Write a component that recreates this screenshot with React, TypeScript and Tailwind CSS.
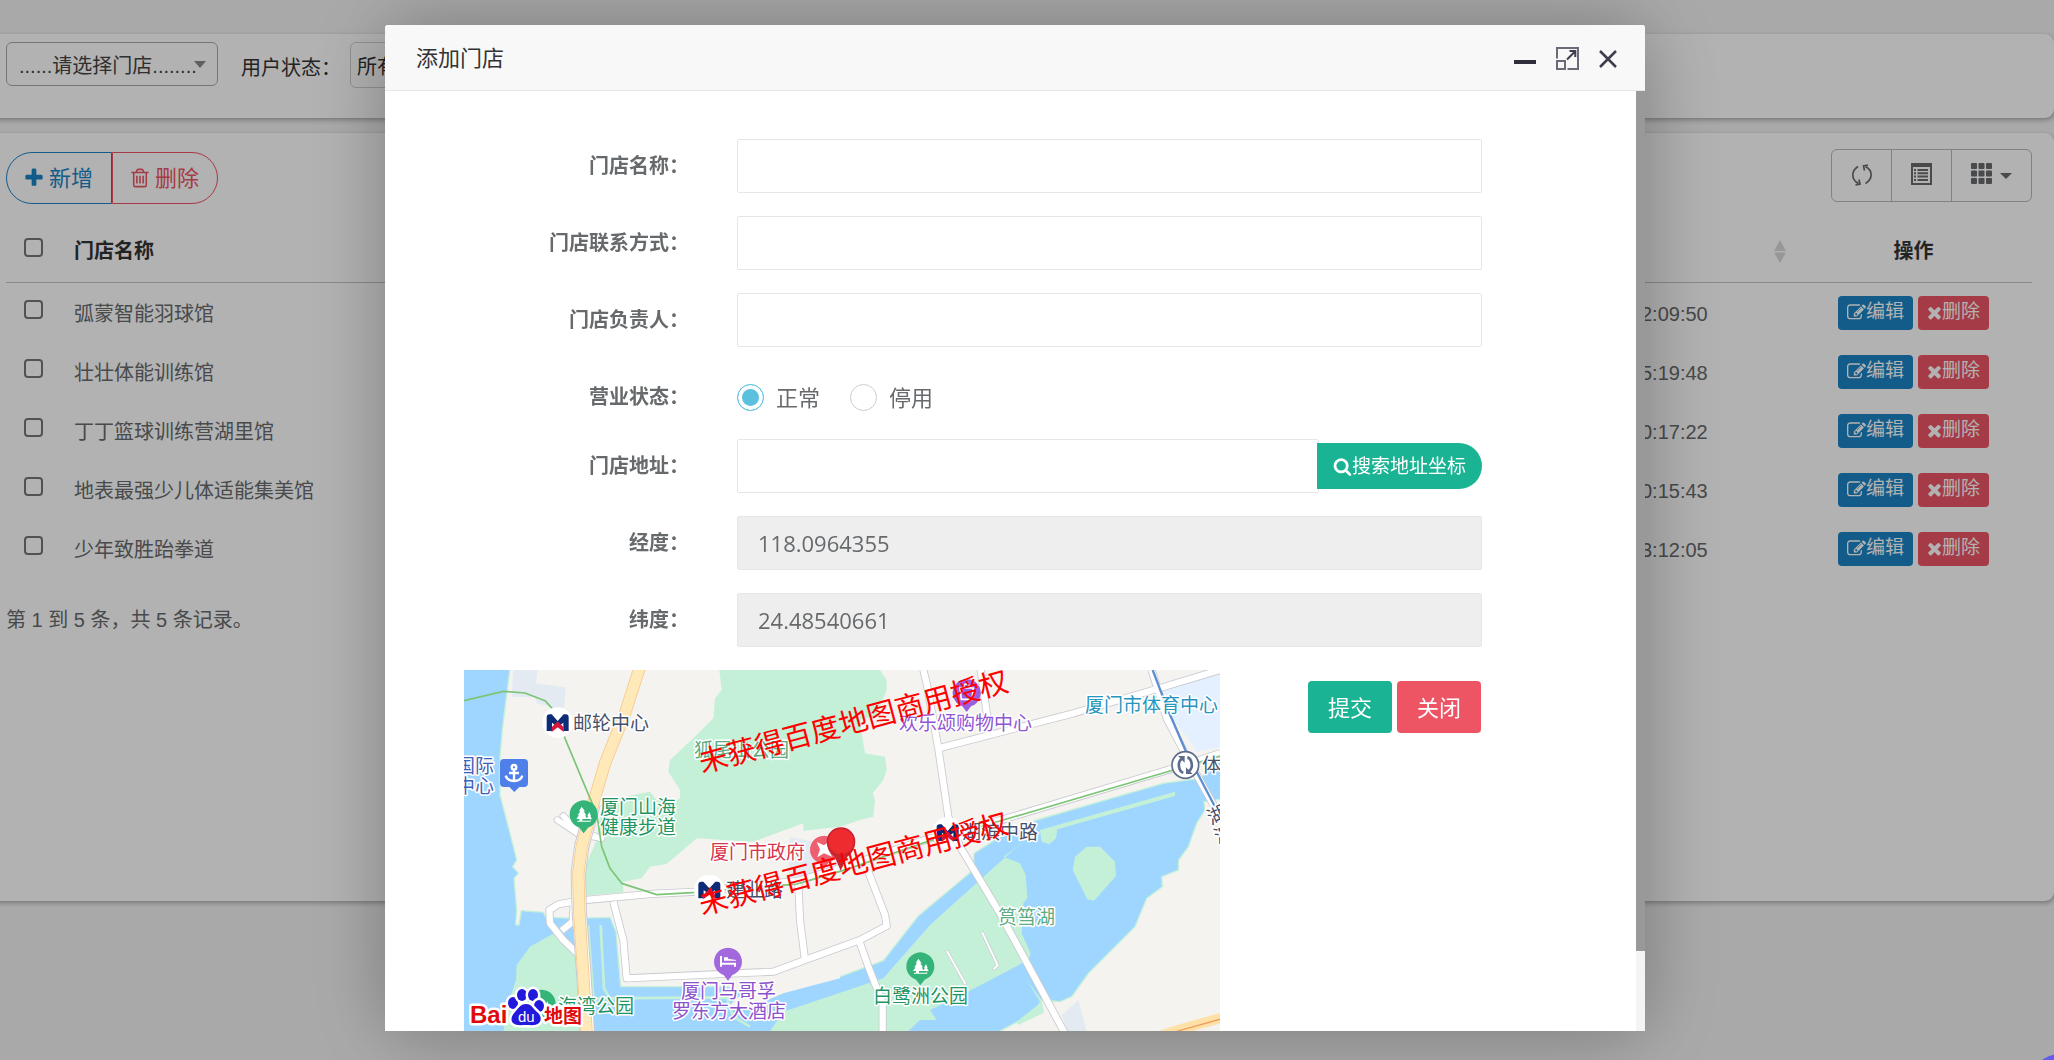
import { useState } from "react";

const icons = {
  plus: "M1600 736v192q0 40-28 68t-68 28h-416v416q0 40-28 68t-68 28h-192q-40 0-68-28t-28-68v-416h-416q-40 0-68-28t-28-68v-192q0-40 28-68t68-28h416v-416q0-40 28-68t68-28h192q40 0 68 28t28 68v416h416q40 0 68 28t28 68z",
  trash:
    "M704 736v576q0 14-9 23t-23 9h-64q-14 0-23-9t-9-23v-576q0-14 9-23t23-9h64q14 0 23 9t9 23zm256 0v576q0 14-9 23t-23 9h-64q-14 0-23-9t-9-23v-576q0-14 9-23t23-9h64q14 0 23 9t9 23zm256 0v576q0 14-9 23t-23 9h-64q-14 0-23-9t-9-23v-576q0-14 9-23t23-9h64q14 0 23 9t9 23zm128 724v-948h-896v948q0 22 7 40.500t14.500 27 10.500 8.500h832q3 0 10.500-8.500t14.500-27 7-40.500zm-672-1076h448l-48-117q-7-9-17-11h-317q-10 2-17 11zm928 32v64q0 14-9 23t-23 9h-96v948q0 83-47 143.500t-113 60.500h-832q-66 0-113-58.500t-47-141.500v-952h-96q-14 0-23-9t-9-23v-64q0-14 9-23t23-9h309l70-167q15-37 54-63t79-26h320q40 0 79 26t54 63l70 167h309q14 0 23 9t9 23z",
  search:
    "M1216 832q0-185-131.500-316.500t-316.500-131.500-316.500 131.500-131.500 316.500 131.500 316.500 316.500 131.500 316.500-131.500 131.500-316.500zm512 832q0 52-38 90t-90 38q-54 0-90-38l-343-342q-179 124-399 124-143 0-273.500-55.500t-225-150-150-225-55.500-273.500 55.500-273.500 150-225 225-150 273.500-55.500 273.500 55.500 225 150 150 225 55.500 273.500q0 220-124 399l343 343q37 37 37 90z",
  times:
    "M1490 1322q0 40-28 68l-136 136q-28 28-68 28t-68-28l-294-294-294 294q-28 28-68 28t-68-28l-136-136q-28-28-28-68t28-68l294-294-294-294q-28-28-28-68t28-68l136-136q28-28 68-28t68 28l294 294 294-294q28-28 68-28t68 28l136 136q28 28 28 68t-28 68l-294 294 294 294q28 28 28 68z",
  edit: "M888 1184l116-116-152-152-116 116v56h96v96h56zm440-720q-16-16-33 1l-350 350q-17 17-1 33t33-1l350-350q17-17 1-33zm80 594v190q0 119-84.500 203.500t-203.500 84.500h-832q-119 0-203.500-84.500t-84.500-203.500v-832q0-119 84.500-203.500t203.500-84.500h832q63 0 117 25 15 7 18 23 3 17-9 29l-49 49q-14 14-32 8-23-6-45-6h-832q-66 0-113 47t-47 113v832q0 66 47 113t113 47h832q66 0 113-47t47-113v-126q0-13 9-22l64-64q15-15 35-7t20 29zm-96-738l288 288-672 672h-288v-288zm444 132l-92 92-288-288 92-92q28-28 68-28t68 28l152 152q28 28 28 68t-28 68z",
};

function Icon({
  name,
  className,
  viewBox = "0 0 1792 1792",
}: {
  name: keyof typeof icons;
  className: string;
  viewBox?: string;
}) {
  return (
    <svg className={className} viewBox={viewBox} fill="currentColor" aria-hidden>
      <path d={icons[name]} />
    </svg>
  );
}

const stores = [
  { name: "弧蒙智能羽球馆", time: "2024-03-18 12:09:50" },
  { name: "壮壮体能训练馆", time: "2024-03-16 15:19:48" },
  { name: "丁丁篮球训练营湖里馆", time: "2024-03-15 10:17:22" },
  { name: "地表最强少儿体适能集美馆", time: "2024-03-15 10:15:43" },
  { name: "少年致胜跆拳道", time: "2024-03-14 13:12:05" },
];

const checkboxClass =
  "block size-[19px] appearance-none rounded border-2 border-[#767676] bg-white checked:bg-[#1c84c6]";

function SearchPanel() {
  return (
    <section className="-ml-3 h-[84px] rounded-[9px] bg-white pt-2 pl-[18px] shadow-[1px_2px_5px_rgba(0,0,0,0.3)]">
      <form className="flex text-[20px] text-[#333]">
        <div className="relative">
          <select
            aria-label="门店"
            className="h-11 w-[212px] appearance-none rounded-md border border-[#aaa] bg-white pt-[3px] pl-3 text-[#444]"
          >
            <option>......请选择门店........</option>
          </select>
          <svg
            className="pointer-events-none absolute top-[19px] right-3 h-[7px] w-3"
            viewBox="0 0 12 7"
            fill="#888"
            aria-hidden
          >
            <path d="M0 0h12L6 7z" />
          </svg>
        </div>
        <label htmlFor="status" className="ml-[23px] pt-[3px] leading-[46px]">
          用户状态：
        </label>
        <select
          id="status"
          className="ml-[9px] h-[46px] w-[160px] appearance-none rounded-md border border-[#d0d0d0] bg-white pt-[3px] pl-[6px]"
        >
          <option>所有</option>
        </select>
      </form>
    </section>
  );
}

function Toolbar() {
  return (
    <div className="flex h-[83px] items-start justify-between">
      <div className="mt-[19px] flex text-[22px]">
        <button className="flex h-[52px] items-center gap-1 rounded-l-full border border-[#1c84c6] pr-[18px] pl-4 text-[#1c84c6]">
          <Icon name="plus" className="size-[22px]" />
          新增
        </button>
        <button className="flex h-[52px] items-center gap-1 rounded-r-full border border-[#ed5565] pr-[18px] pl-4 text-[#ed5565]">
          <Icon name="trash" className="size-[22px]" />
          删除
        </button>
      </div>
      <div className="mt-4 flex h-[53px] divide-x divide-[#bbb] rounded-md border border-[#bbb] text-[#676a6c]">
        <button aria-label="刷新" className="flex w-[60px] items-center justify-center pb-0.5">
          <svg className="size-[22px]" viewBox="0 0 22 22" fill="none" stroke="currentColor" strokeWidth="1.700" aria-hidden>
            <path d="M7 2.500C0 7 0 15.500 7.500 19.500M14.500 19.500C22 15 22 6.500 14.500 2.500" />
            <path d="M4.500 21l4.500-1-1-4.500M17 1l-4.500 1 1 4.500" />
          </svg>
        </button>
        <button aria-label="切换" className="flex w-[60px] items-center justify-center pb-1">
          <svg className="size-[22px]" viewBox="0 0 22 22" fill="currentColor" aria-hidden>
            <path fillRule="evenodd" d="M0 0h21v22H0zM2 4v16h17V4z" />
            <path d="M3 6h2v2H3zM6.500 6H17v2H6.500zM3 9.300h2v2H3zM6.500 9.300H17v2H6.500zM3 12.600h2v2H3zM6.500 12.600H17v2H6.500zM3 16h2v2H3zM6.500 16H17v2H6.500z" />
          </svg>
        </button>
        <button aria-label="列" className="flex w-[79px] items-center justify-center gap-2 pb-1">
          <svg className="size-[21px]" viewBox="0 0 21 21" fill="currentColor" aria-hidden>
            {[0, 7.5, 15].map((y) =>
              [0, 7.5, 15].map((x) => (
                <rect key={`${x}-${y}`} x={x} y={y} width="6" height="6" rx="1" />
              ))
            )}
          </svg>
          <svg className="mt-1 h-[6px] w-3" viewBox="0 0 12 6" fill="currentColor" aria-hidden>
            <path d="M0 0h12L6 6z" />
          </svg>
        </button>
      </div>
    </div>
  );
}

function StorePanel() {
  return (
    <section className="-ml-3 min-h-[768px] rounded-[9px] bg-white pr-[22px] pl-[18px] text-[20px] text-[#676a6c] shadow-[1px_2px_5px_rgba(0,0,0,0.3)]">
      <Toolbar />
      <table className="w-full table-fixed border-separate border-spacing-0">
        <thead>
          <tr className="h-[67px] text-left text-[#333]">
            <th className="w-[68px] border-b border-[#c4c4c4] pb-1 pl-[18px]">
              <input type="checkbox" aria-label="全选" className={checkboxClass} />
            </th>
            <th className="border-b border-[#c4c4c4] pt-1">门店名称</th>
            <th className="w-[273px] border-b border-[#c4c4c4] pt-1">
              <div className="flex items-center justify-between pr-[9px]">
                创建时间
                <svg className="h-[23px] w-3" viewBox="0 0 12 23" fill="#d8d8d8" aria-hidden>
                  <path d="M0 11L6 0l6 11zM0 12.500h12L6 23z" />
                </svg>
              </div>
            </th>
            <th className="w-[237px] border-b border-[#c4c4c4] pt-1 text-center">操作</th>
          </tr>
        </thead>
        <tbody>
          {stores.map(({ name, time }) => (
            <tr key={name} className="h-[59px]">
              <td className="pb-1.5 pl-[18px]">
                <input type="checkbox" aria-label={name} className={checkboxClass} />
              </td>
              <td className="pt-0.5">{name}</td>
              <td className="pt-0.5">{time}</td>
              <td>
                <div className="flex justify-center gap-[5px] text-[19px] text-white">
                  <button className="flex h-[34px] items-center rounded bg-[#1c84c6] px-[9px]">
                    <Icon name="edit" className="size-[19px]" />
                    编辑
                  </button>
                  <button className="flex h-[34px] items-center rounded bg-[#ed5565] px-[9px]">
                    <Icon name="times" className="h-[19px] w-[15px]" viewBox="192 0 1408 1792" />
                    删除
                  </button>
                </div>
              </td>
            </tr>
          ))}
        </tbody>
      </table>
      <p className="mt-[27px] leading-[30px]">第 1 到 5 条，共 5 条记录。</p>
    </section>
  );
}

function Metro({ x, y }: { x: number; y: number }) {
  return (
    <g transform={`translate(${x} ${y})`}>
      <circle r="46" fill="#fff" />
      <path d="M-33 25v-41q0-9 9-9h6L0-5l18-20h6q9 0 9 9v41H17V0L0 14-17 0v25z" fill="#0c2c78" />
      <path d="M0-4l18 18v14L0 14l-18 14V14z" fill="#d6173c" />
    </g>
  );
}

function Pin({ x, y, fill, children }: { x: number; y: number; fill: string; children: React.ReactNode }) {
  return (
    <g transform={`translate(${x} ${y})`}>
      <path d="M0 58L-13 41A42 42 0 1 1 13 41z" fill={fill} />
      {children}
    </g>
  );
}

const Trees = () => (
  <path
    d="M-6-22l10 14h-4l8 12h-4l7 11H-4v5h24v-5H8l6-9h-3l6-12 5 12h-2l5 9h-6v5h2v3h-40v-3h6v-5h-9l8-11h-4l8-12h-4z"
    fill="#fff"
  />
);

const roads = [
  "M385 722L600 702L740 695L1045 662L1190 618L1430 538L1660 478L2170 325L2310 280",
  "M1420 30L1430 70L1465 265L1495 470L1530 560L1650 760L1850 1130",
  "M1465 265L1870 160L2110 90L2310 30",
  "M1592 30L1620 228",
  "M2105 30L2150 175L2210 290L2310 470",
  "M490 725L520 840L530 955L970 935L1065 900L1230 840L1310 798L1305 765L1255 635",
  "M1045 670L1050 780L1065 900",
  "M1225 835L1255 920L1298 1030L1298 1130",
  "M385 722L325 733L298 750L300 790L340 840L392 890",
  "M372 720L368 785L335 812",
];

const labels = [
  { text: "邮轮中心", x: 109, y: 60, fill: "#46506a" },
  { text: "国际", x: -8, y: 103, fill: "#3f62b8" },
  { text: "中心", x: -8, y: 123, fill: "#3f62b8" },
  { text: "厦门山海", x: 136, y: 144, fill: "#1f9563" },
  { text: "健康步道", x: 136, y: 164, fill: "#1f9563" },
  { text: "狐尾山公园", x: 230, y: 87, fill: "#5cab82" },
  { text: "厦门市政府", x: 246, y: 189, fill: "#d6354c" },
  { text: "建业路", x: 262, y: 227, fill: "#46506a" },
  { text: "厦门马哥孚", x: 217, y: 328, fill: "#8c52cc" },
  { text: "罗东方大酒店", x: 208, y: 348, fill: "#8c52cc" },
  { text: "海湾公园", x: 94, y: 343, fill: "#1f9563" },
  { text: "欢乐颂购物中心", x: 435, y: 60, fill: "#9056d3" },
  { text: "厦门市体育中心", x: 621, y: 42, fill: "#2795bd" },
  { text: "湖滨中路", x: 498, y: 169, fill: "#46506a" },
  { text: "体育", x: 738, y: 102, fill: "#46506a" },
  { text: "筼筜湖", x: 534, y: 254, fill: "#5cab82" },
  { text: "白鹭洲公园", x: 409, y: 333, fill: "#1f9563" },
];

function StoreMap() {
  return (
    <svg
      className="block h-[361px] w-[756px] shrink-0 bg-[#f4f3f0] font-['Noto_Sans_CJK_SC',sans-serif]"
      viewBox="0 0 756 361"
      role="img"
      aria-label="百度地图"
    >
      <g transform="translate(-14 -10) scale(0.333333)">
        {/* blocks */}
        <path d="M190 30H262L258 70L347 82L342 150L260 130L255 112L185 110z" fill="#e3eaf2" />
        <path d="M2310 42L2140 90L2170 180L2220 240L2240 275L2310 260z" fill="#e4efff" />
        <path d="M1020 530L1090 545L1100 640L1015 655z" fill="#e3eaf2" />
        <path d="M1835 1065L1885 1020L1910 1113H1850z" fill="#e3eaf2" />
        {/* water */}
        <path
          d="M20 10H182L168 120L158 200L150 290L150 405L180 520L200 600L188 620L205 640L192 655L200 750L197 795H207L214 752L280 757L287 772L380 775L480 772L498 815L512 980H835L890 1010L1000 995L1170 950L1300 902L1405 768L1570 630L1572 580L1650 530L1760 480L1950 425L2140 370L2250 355L2330 285V415L2262 425L2265 450L2240 490L2215 560L2186 600L2185 630L2135 650L2137 680L2090 715L2055 800L1970 885L1915 940L1865 1010L1830 1025L1775 1020L1750 1060L1650 1113V1140H20z"
          fill="#9fd6ff"
          stroke="#c4f0d8"
          strokeWidth="4"
        />
        {/* parks */}
        <path
          d="M808 30L815 90L795 115L790 175L730 235L660 300L655 335L690 390L690 415L660 430L620 420L600 395L550 405L455 430L440 540L405 620V707L520 697V665L575 655L600 620L650 612L740 535L910 545L1060 490V512L1170 500L1230 480L1270 470L1275 420L1268 400L1300 360L1310 330L1305 290L1245 280L1235 220L1230 180L1280 165L1310 90V60L1290 30z"
          fill="#c4f0d8"
        />
        <path d="M312 820L240 860L200 915L198 960L185 1000L160 1113H400L385 890L340 850z" fill="#c4f0d8" />
        <path
          d="M1000 1055L1170 998L1300 955L1440 795L1590 660L1690 570L1735 535L1660 590L1710 610L1727 645L1732 715L1720 730L1715 820L1742 880L1735 900L1545 1000L1440 1050L1460 1080L1410 1080L1375 1113H960z"
          fill="#c4f0d8"
        />
        <path d="M1770 510L2175 395V408L1822 508L1818 535L1798 553L1775 545z" fill="#c4f0d8" />
        <path d="M1910 560H1950L1995 605L1998 648L1932 722L1912 718L1868 630L1875 590z" fill="#c4f0d8" />
        <path d="M1730 960L1775 1020L1782 1058L1705 1095L1700 1085L1772 1028z" fill="#c4f0d8" />
        <path d="M414 795L430 1015L830 1012L850 1070L900 1100M452 795L462 985L480 1015" fill="none" stroke="#c4f0d8" strokeWidth="8" />
        <path d="M835 1040L865 1010L1170 940L1170 955L1000 1000L880 1050z" fill="#f4f3f0" />
        {/* roads */}
        <g fill="none" strokeLinejoin="round">
          {roads.map((d) => (
            <path key={d} d={d} stroke="#c9cad0" strokeWidth="24" />
          ))}
          <path d="M340 468L370 500L450 535M322 480L385 522L455 535" stroke="#c9cad0" strokeWidth="22" strokeLinecap="round" />
          {roads.map((d) => (
            <path key={d} d={d} stroke="#fff" strokeWidth="19" />
          ))}
          <path d="M340 468L370 500L450 535M322 480L385 522L455 535" stroke="#fff" strokeWidth="17" strokeLinecap="round" />
          <path d="M430 430L395 560L385 640L388 760L402 950L412 1120" stroke="#c9cad0" strokeWidth="46" />
          <path d="M430 430L395 560L385 640L388 760L402 950L412 1120" stroke="#fff" strokeWidth="40" />
          <path d="M570 20L525 160L465 310L430 430L395 560L385 640L388 760L400 950L410 1120" stroke="#f5c98e" strokeWidth="37" />
          <path d="M570 20L525 160L465 310L430 430L395 560L385 640L388 760L400 950L410 1120" stroke="#ffe9b8" strokeWidth="32" />
          <path d="M2080 1145L2180 1111L2320 1072" stroke="#ffe1a8" strokeWidth="30" />
          <path d="M2080 1148L2180 1114L2320 1075" stroke="#ee9d5c" strokeWidth="4" />
          <path d="M1492 875L1545 970M1597 818L1643 916L1632 926" stroke="#c9cad0" strokeWidth="10" strokeLinecap="round" />
          <path d="M1492 875L1545 970M1597 818L1643 916L1632 926" stroke="#fff" strokeWidth="6" strokeLinecap="round" />
          <path
            d="M42 122L160 94L225 99L285 122L320 160L345 235L418 410L440 460L455 560L480 625L515 670L620 704L740 697L1040 672L1190 628L1430 545L1660 480L2170 330L2310 288"
            stroke="#7cc576"
            strokeWidth="5"
          />
          <path d="M2108 30L2150 140L2206 270L2295 440" stroke="#5d8fd0" strokeWidth="7" />
        </g>
        {/* markers */}
        <Metro x={323} y={188} />
        <Metro x={778} y={690} />
        <Metro x={1493} y={518} />
        <Pin x={401} y={462} fill="#34b479">
          <Trees />
        </Pin>
        <Pin x={1411} y={918} fill="#34b479">
          <Trees />
        </Pin>
        <Pin x={275} y={1030} fill="#34b479">
          <Trees />
        </Pin>
        <Pin x={834} y={904} fill="#a169dd">
          <path d="M-24-16h6v20h42V-4L0-8v-4h-12v10H24v18h-6V10h-36v6h-6z" fill="#fff" />
        </Pin>
        <Pin x={1550} y={98} fill="#9a5fe0">
          <path d="M-20-14h40l-4 34h-32zM-9-14q0-12 9-12t9 12" fill="none" stroke="#fff" strokeWidth="5" />
        </Pin>
        <path d="M162 297h60q12 0 12 12v60q0 12-12 12h-14l-15 15-15-15h-16q-12 0-12-12v-60q0-12 12-12z" fill="#4f80ea" />
        <g fill="none" stroke="#fff" strokeWidth="7">
          <circle cx="192" cy="322" r="7" />
          <path d="M192 330V362M177 339H207M167 347Q172 363 192 363T217 347" />
        </g>
        <Pin x={1122} y={568} fill="#ee5f70">
          <path d="M-22-22L0-12 18-24 12-2 24 22 0 12-20 24-12 0z" fill="#fff" />
        </Pin>
        <path d="M1172 632L1154 590Q1130 572 1130 545A43 43 0 1 1 1216 545Q1216 572 1192 590z" fill="#c92430" />
        <circle cx="1173" cy="545" r="38" fill="#ee2b2e" />
        <circle cx="2206" cy="315" r="40" fill="#fff" stroke="#5d6c8c" strokeWidth="5" />
        <path
          d="M2196 296Q2184 304 2187 320T2200 338M2216 334Q2228 326 2225 310T2212 292"
          fill="none"
          stroke="#5d6c8c"
          strokeWidth="8"
        />
        <path d="M2184 288h20v20zM2228 342h-20v-20z" fill="#5d6c8c" />
      </g>
      <g fontSize="19" stroke="#fff" strokeWidth="3" strokeLinejoin="round" paintOrder="stroke">
        {labels.map(({ text, x, y, fill }) => (
          <text key={`${text}${x}`} x={x} y={y} fill={fill}>
            {text}
          </text>
        ))}
        <text transform="translate(747 155) rotate(-25)" fill="#46506a">
          湖
        </text>
        <text transform="translate(754 174) rotate(-25)" fill="#46506a">
          滨
        </text>
      </g>
      {/* logo */}
      <g stroke="#fff" strokeWidth="5" strokeLinejoin="round" paintOrder="stroke">
        <text x="6" y="353" fontSize="24" fontWeight="700" fill="#e10a0a" className="font-['Liberation_Sans',sans-serif]">
          Bai
        </text>
        <text x="80" y="353" fontSize="19" fontWeight="700" fill="#e10a0a">
          地图
        </text>
        <g fill="#2319dc">
          <ellipse cx="49" cy="333" rx="5" ry="6" />
          <ellipse cx="58" cy="325" rx="5" ry="6" />
          <ellipse cx="69" cy="325" rx="5" ry="6" />
          <ellipse cx="75" cy="336" rx="5" ry="6" />
          <path d="M62 334c6 0 7 5 11 8s5 8 2 11-8 2-13 2-10 1-13-2-1-8 2-11 5-8 11-8z" />
        </g>
      </g>
      <text x="54" y="352" fontSize="15" fill="#fff" className="font-['Liberation_Sans',sans-serif]">
        du
      </text>
      <g fontSize="29" fill="#f00">
        <text transform="translate(238 103) rotate(-15)">未获得百度地图商用授权</text>
        <text transform="translate(238 245) rotate(-15)">未获得百度地图商用授权</text>
      </g>
    </svg>
  );
}

const labelClass = "w-[304px] shrink-0 text-right text-[20px] font-bold";
const inputClass = "h-[54px] w-full rounded-xs border border-[#e5e6e7] bg-white px-5 text-[22px] read-only:bg-[#eee]";

function Field({ id, label, value }: { id: string; label: string; value?: string }) {
  return (
    <div className="flex items-center gap-12">
      <label htmlFor={id} className={labelClass}>
        {label}
      </label>
      <input id={id} type="text" defaultValue={value} readOnly={value !== undefined} className={inputClass} />
    </div>
  );
}

function StoreForm() {
  const [status, setStatus] = useState("正常");

  return (
    <form className="flex min-w-0 flex-1 flex-col gap-[23px] overflow-hidden pt-12 text-[#676a6c]">
      <div className="flex flex-col gap-[23px] pr-[154px]">
        <Field id="name" label="门店名称：" />
        <Field id="phone" label="门店联系方式：" />
        <Field id="manager" label="门店负责人：" />
        <div className="flex h-[46px] items-center gap-12 pt-2">
          <span className={labelClass}>营业状态：</span>
          <div className="flex gap-[30px] text-[22px]">
            {["正常", "停用"].map((option) => (
              <label key={option} className="flex items-center gap-3">
                <input
                  type="radio"
                  name="status"
                  checked={status === option}
                  onChange={() => setStatus(option)}
                  className="size-[27px] appearance-none rounded-full border border-[#ccc] checked:border-[#5bc0de] checked:bg-[#5bc0de] checked:shadow-[inset_0_0_0_4px_#fff]"
                />
                {option}
              </label>
            ))}
          </div>
        </div>
        <div className="flex items-center gap-12">
          <label htmlFor="address" className={labelClass}>
            门店地址：
          </label>
          <div className="flex flex-1 items-center">
            <input id="address" type="text" className={inputClass} />
            <button
              type="button"
              className="-ml-0.5 flex h-[46px] shrink-0 items-center rounded-r-full bg-[#1ab394] px-4 text-[19px] text-white"
            >
              <Icon name="search" className="size-[19px]" />
              搜索地址坐标
            </button>
          </div>
        </div>
        <Field id="lng" label="经度：" value="118.0964355" />
        <Field id="lat" label="纬度：" value="24.48540661" />
      </div>
      <div className="flex items-start justify-between pr-[155px] pl-[79px]">
        <StoreMap />
        <div className="mt-[11px] flex gap-[5px] text-[22px] text-white">
          <button type="submit" className="h-[52px] rounded bg-[#1ab394] px-5">
            提交
          </button>
          <button type="button" className="h-[52px] rounded bg-[#ed5565] px-5">
            关闭
          </button>
        </div>
      </div>
    </form>
  );
}

function StoreDialog() {
  return (
    <div className="fixed inset-0 flex justify-center bg-black/30 pt-[25px] pr-6 pb-[29px]">
      <div
        role="dialog"
        aria-labelledby="dialog-title"
        className="flex w-full max-w-[1260px] flex-col rounded-t-[3px] bg-white font-['Open_Sans','Noto_Sans_CJK_SC',sans-serif] shadow-[1px_1px_78px_rgba(0,0,0,0.3)]"
      >
        <header className="flex h-[66px] shrink-0 items-center rounded-t-[3px] border-b border-[#e8e8e8] bg-[#f8f8f8] pr-7 pl-[31px] text-[#2e2d3c]">
          <h2 id="dialog-title" className="flex-1 text-[22px] text-[#333]">
            添加门店
          </h2>
          <div className="flex items-center gap-5 pt-0.5">
            <button aria-label="最小化">
              <svg className="size-[22px]" viewBox="0 0 22 22" aria-hidden>
                <path d="M0 12h22v4H0z" fill="currentColor" />
              </svg>
            </button>
            <button aria-label="最大化">
              <svg className="size-[23px]" viewBox="0 0 23 23" fill="none" stroke="#6b6a78" strokeWidth="2" aria-hidden>
                <path d="M1 11.500V1h21v21H11.500" />
                <path d="M1 14h8v8H1z" />
                <path d="M11 12.500L19 4.500M13.500 4H19.300V10" stroke="#3e3d4c" />
              </svg>
            </button>
            <button aria-label="关闭">
              <svg className="size-[18px]" viewBox="0 0 18 18" fill="none" stroke="#3e3d4c" strokeWidth="2.500" aria-hidden>
                <path d="M1 1l16 16M17 1L1 17" />
              </svg>
            </button>
          </div>
        </header>
        <div className="flex min-h-0 flex-1">
          <StoreForm />
          <div className="w-[9px] shrink-0 bg-[#f4f4f4]">
            <div className="h-[91.5%] bg-[#999]" />
          </div>
        </div>
      </div>
    </div>
  );
}

export default function App() {
  return (
    <div className="h-screen overflow-hidden bg-[#f3f3f4] font-['Liberation_Sans','Noto_Sans_CJK_SC',sans-serif]">
      <main className="flex flex-col gap-[15px] pt-[34px]">
        <SearchPanel />
        <StorePanel />
      </main>
      <StoreDialog />
      {/* floating widget, only its edge shows in the corner */}
      <button aria-label="更多" className="fixed -right-9 -bottom-[54px] size-[60px] rounded-full bg-[#635bee]" />
    </div>
  );
}
